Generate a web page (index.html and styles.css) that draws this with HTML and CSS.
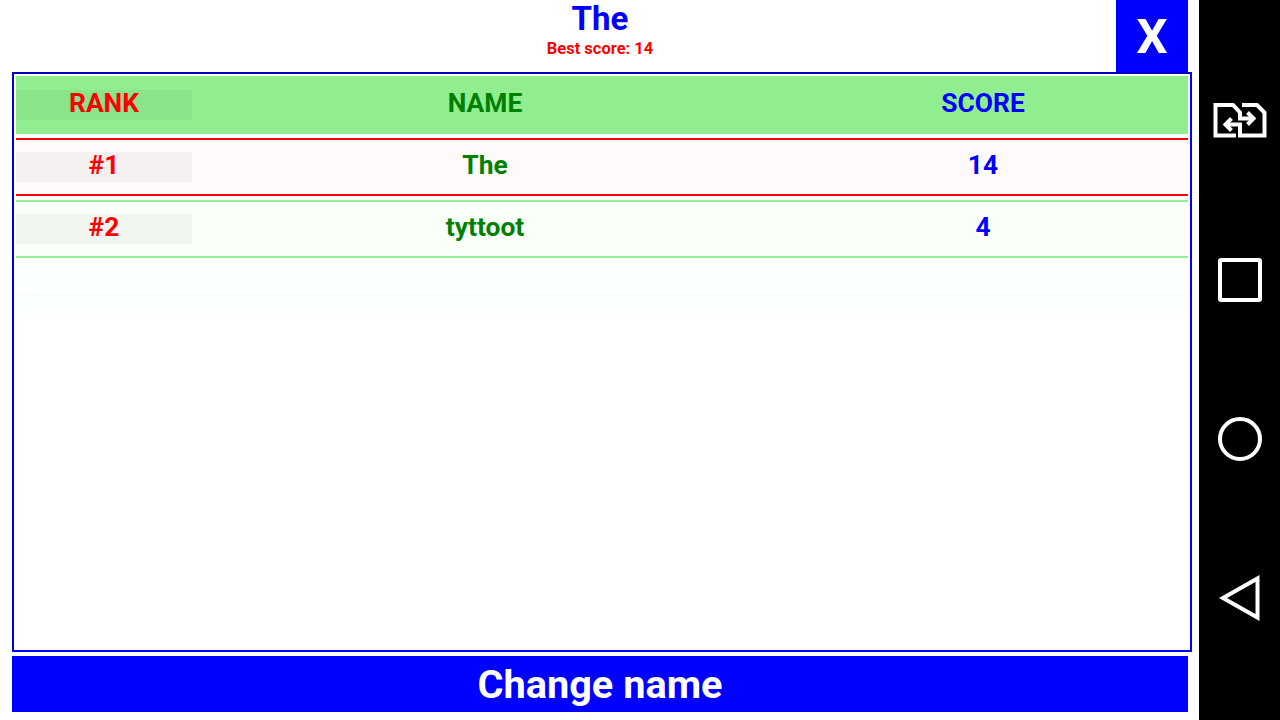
FILE: index.html
```html
<!DOCTYPE html>
<html lang="en">
<head>
    <meta charset="UTF-8">
    <meta name="viewport" content="width=device-width, initial-scale=1.0">
    <title>Leaderboard</title>
    <link rel="stylesheet" href="styles.css">
</head>
<body>

    <div class="app">
        <!-- Header -->
        <div class="header">
            <h1>The</h1>
            <p>Best score: 14</p>
            <button class="close-button">X</button>
        </div>

        <!-- Score table -->
        <div class="board">
            <div class="row row-head">
                <span class="rank">RANK</span>
                <span class="name">NAME</span>
                <span class="score">SCORE</span>
            </div>
            <div class="row row-first">
                <span class="rank">#1</span>
                <span class="name">The</span>
                <span class="score">14</span>
            </div>
            <div class="row row-second">
                <span class="rank">#2</span>
                <span class="name">tyttoot</span>
                <span class="score">4</span>
            </div>
            <div class="stripe stripe-tall"></div>
            <div class="stripe stripe-short"></div>
        </div>

        <button class="change-button">Change name</button>
    </div>

    <!-- Navigation bar -->
    <div class="navbar">
        <svg class="nav-icon" width="56" height="40" viewBox="0 0 56 40">
            <path d="M24 35.500H3.500V5H21L28 12.500V18.500H41"/>
            <path d="M35.500 12.500L41.500 18.500L35.500 24.500"/>
            <path d="M30 5H45L52.500 12.500V35.500H28V24.500H14"/>
            <path d="M19.500 18.500L13.500 24.500L19.500 30.500"/>
        </svg>
        <svg class="nav-icon" width="48" height="48" viewBox="0 0 48 48">
            <rect x="4" y="4" width="40" height="40" rx="1"/>
        </svg>
        <svg class="nav-icon" width="48" height="48" viewBox="0 0 48 48">
            <circle cx="24" cy="24" r="20"/>
        </svg>
        <svg class="nav-icon" width="48" height="48" viewBox="0 0 48 48">
            <path d="M7 24L41.500 4.500V43.500Z"/>
        </svg>
    </div>

</body>
</html>
```

FILE: styles.css
```css
* {
    margin: 0;
    padding: 0;
    box-sizing: border-box;
}

body {
    font-family: 'Roboto', sans-serif;
    font-weight: 700;
    background: #fff;
    width: 1280px;
    height: 720px;
    display: flex;
    overflow: hidden;
}

.app {
    width: 1199px;
    padding: 0 11px 8px 12px;
    display: flex;
    flex-direction: column;
}

.header {
    position: relative;
    height: 72px;
    text-align: center;
}

.header h1 {
    font-size: 33px;
    line-height: 37px;
    color: #00f;
}

.header p {
    font-size: 16.500px;
    line-height: 24px;
    color: #f00;
}

.close-button {
    position: absolute;
    top: 0;
    right: 0;
    width: 72px;
    height: 72px;
    border: none;
    background: #00f;
    color: #fff;
    font-family: inherit;
    font-weight: 700;
    font-size: 49px;
}

.board {
    width: 1180px;
    height: 580px;
    border: 2px solid #00f;
    border-top-color: #0000c0;
    border-left-color: #0000c8;
    padding: 2px;
}

.row {
    width: 1172px;
    display: grid;
    grid-template-columns: 176px 586px 410px;
    align-items: center;
    font-size: 26.400px;
    text-align: center;
}

.rank {
    height: 30px;
    line-height: 26px;
    color: #f00;
    background: rgba(0, 0, 0, 0.035);
}

.name {
    color: #008000;
    line-height: 28px;
    margin-top: -4px;
}

.score {
    color: #00f;
    line-height: 28px;
    margin-top: -4px;
}

.row-head {
    height: 58px;
    background: #90ee90;
}

.row-first {
    height: 58px;
    margin-top: 4px;
    background: #fffafa;
    border-top: 2px solid #f00;
    border-bottom: 2px solid #f00;
}

.row-second {
    height: 58px;
    margin-top: 4px;
    background: #fafffa;
    border-top: 2px solid #90ee90;
    border-bottom: 2px solid #90ee90;
}

.stripe {
    width: 1172px;
    background: #fbfffb;
}

.stripe-tall {
    height: 24px;
    margin-top: 4px;
}

.stripe-short {
    height: 21px;
    margin-top: 6px;
}

.change-button {
    width: 1176px;
    height: 56px;
    margin-top: 4px;
    border: none;
    background: #00f;
    color: #fff;
    font-family: inherit;
    font-weight: 700;
    font-size: 39.700px;
}

.navbar {
    width: 81px;
    height: 720px;
    background: #000;
    display: flex;
    flex-direction: column;
    align-items: center;
    padding-top: 100px;
    gap: 111px;
}

.nav-icon {
    fill: none;
    stroke: #fff;
    stroke-width: 4;
    flex: none;
}

.nav-icon:nth-child(2) {
    margin-top: 5px;
}
```
